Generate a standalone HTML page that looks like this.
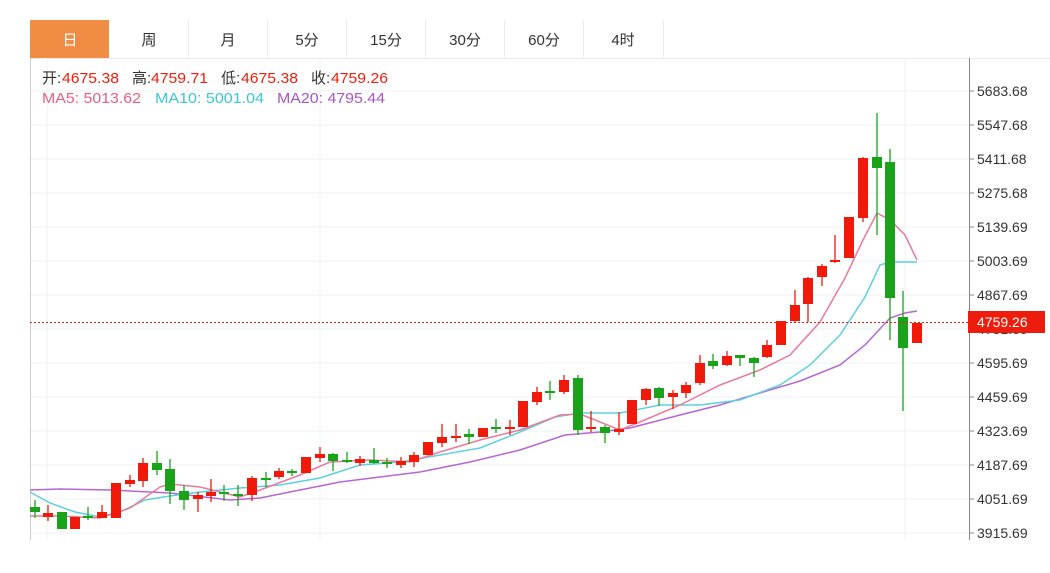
<!DOCTYPE html>
<html><head><meta charset="utf-8"><style>
html,body{margin:0;padding:0;background:#fff;width:1050px;height:573px;overflow:hidden}
svg{display:block;font-family:"Liberation Sans","Noto Sans CJK SC",sans-serif}
</style></head><body>
<svg width="1050" height="573" viewBox="0 0 1050 573" xmlns="http://www.w3.org/2000/svg">
<g font-size="15" fill="#333" text-anchor="middle">
<rect x="30" y="20" width="79" height="38" fill="#f08c43"/>
<line x1="30" y1="58.5" x2="1050" y2="58.5" stroke="#ececec"/>
<g stroke="#ececec"><line x1="188.5" y1="20" x2="188.5" y2="58"/><line x1="267.5" y1="20" x2="267.5" y2="58"/><line x1="346.5" y1="20" x2="346.5" y2="58"/><line x1="425.5" y1="20" x2="425.5" y2="58"/><line x1="504.5" y1="20" x2="504.5" y2="58"/><line x1="583.5" y1="20" x2="583.5" y2="58"/><line x1="663.5" y1="20" x2="663.5" y2="58"/></g>
<text x="70" y="45" fill="#fff">日</text>
<text x="149" y="45">周</text>
<text x="228" y="45">月</text>
<text x="307" y="45">5分</text>
<text x="386" y="45">15分</text>
<text x="465" y="45">30分</text>
<text x="544" y="45">60分</text>
<text x="623" y="45">4时</text>
</g>
<g stroke="#eef0f3">
<line x1="30" y1="91" x2="969" y2="91"/><line x1="30" y1="125" x2="969" y2="125"/><line x1="30" y1="159" x2="969" y2="159"/><line x1="30" y1="193" x2="969" y2="193"/><line x1="30" y1="227" x2="969" y2="227"/><line x1="30" y1="261" x2="969" y2="261"/><line x1="30" y1="295" x2="969" y2="295"/><line x1="30" y1="329" x2="969" y2="329"/><line x1="30" y1="363" x2="969" y2="363"/><line x1="30" y1="397" x2="969" y2="397"/><line x1="30" y1="431" x2="969" y2="431"/><line x1="30" y1="465" x2="969" y2="465"/><line x1="30" y1="499" x2="969" y2="499"/><line x1="30" y1="533" x2="969" y2="533"/>
<line x1="47" y1="58" x2="47" y2="540"/><line x1="320" y1="58" x2="320" y2="540"/><line x1="905" y1="58" x2="905" y2="540"/>
</g>
<line x1="30.5" y1="58" x2="30.5" y2="540" stroke="#ccc"/>
<line x1="969.5" y1="58" x2="969.5" y2="540" stroke="#888"/>
<g stroke="#888"><line x1="969" y1="91" x2="974" y2="91"/><line x1="969" y1="125" x2="974" y2="125"/><line x1="969" y1="159" x2="974" y2="159"/><line x1="969" y1="193" x2="974" y2="193"/><line x1="969" y1="227" x2="974" y2="227"/><line x1="969" y1="261" x2="974" y2="261"/><line x1="969" y1="295" x2="974" y2="295"/><line x1="969" y1="329" x2="974" y2="329"/><line x1="969" y1="363" x2="974" y2="363"/><line x1="969" y1="397" x2="974" y2="397"/><line x1="969" y1="431" x2="974" y2="431"/><line x1="969" y1="465" x2="974" y2="465"/><line x1="969" y1="499" x2="974" y2="499"/><line x1="969" y1="533" x2="974" y2="533"/></g>
<g font-size="14" fill="#333">
<text x="977" y="96">5683.68</text><text x="977" y="130">5547.68</text><text x="977" y="164">5411.68</text><text x="977" y="198">5275.68</text><text x="977" y="232">5139.69</text><text x="977" y="266">5003.69</text><text x="977" y="300">4867.69</text><text x="977" y="334">4731.69</text><text x="977" y="368">4595.69</text><text x="977" y="402">4459.69</text><text x="977" y="436">4323.69</text><text x="977" y="470">4187.69</text><text x="977" y="504">4051.69</text><text x="977" y="538">3915.69</text>
</g>
<g font-size="15">
<text x="42" y="83" fill="#333">开:</text><text x="62" y="83" fill="#f01e0a" textLength="57" lengthAdjust="spacingAndGlyphs">4675.38</text>
<text x="132" y="83" fill="#333">高:</text><text x="151" y="83" fill="#f01e0a" textLength="57" lengthAdjust="spacingAndGlyphs">4759.71</text>
<text x="221" y="83" fill="#333">低:</text><text x="241" y="83" fill="#f01e0a" textLength="57" lengthAdjust="spacingAndGlyphs">4675.38</text>
<text x="311" y="83" fill="#333">收:</text><text x="331" y="83" fill="#f01e0a" textLength="57" lengthAdjust="spacingAndGlyphs">4759.26</text>
<text x="42" y="103" fill="#e8607f" textLength="99" lengthAdjust="spacingAndGlyphs">MA5: 5013.62</text>
<text x="155" y="103" fill="#3cc6d8" textLength="109" lengthAdjust="spacingAndGlyphs">MA10: 5001.04</text>
<text x="277" y="103" fill="#a855c8" textLength="108" lengthAdjust="spacingAndGlyphs">MA20: 4795.44</text>
</g>
<polyline fill="none" stroke="#b667d4" stroke-width="1.5" points="30,490 60,489 110,490 170,493 230,500 260,498 300,490 340,482 380,477 420,472 470,462 520,450 565,435 600,432 630,428 680,415 720,405 760,393 800,381 840,365 865,345 890,318 905,313 917,311"/>
<polyline fill="none" stroke="#5ed0e0" stroke-width="1.5" points="30,492 50,503 75,512 100,517 120,512 145,500 170,496 200,492 240,488 280,485 320,478 360,465 400,462 440,455 480,448 520,432 555,417 580,413 620,413 660,405 700,405 740,400 780,385 810,365 840,335 865,297 880,265 890,262 917,262"/>
<polyline fill="none" stroke="#ea7a9c" stroke-width="1.5" points="30,516 60,516 100,518 130,508 160,487 170,484 200,487 240,497 260,490 300,475 330,462 370,460 410,462 440,452 480,440 520,430 560,415 580,414 620,430 640,422 680,405 720,385 760,370 790,355 820,322 845,278 863,240 877,213 890,220 905,235 917,260"/>
<g stroke="#1aa31a" stroke-width="1.3">
<line x1="35" y1="500" x2="35" y2="518"/><line x1="62" y1="512" x2="62" y2="529"/><line x1="88" y1="507" x2="88" y2="520"/><line x1="157" y1="451" x2="157" y2="475"/><line x1="170" y1="459" x2="170" y2="504"/><line x1="184" y1="485" x2="184" y2="510"/><line x1="224" y1="485" x2="224" y2="501"/><line x1="238" y1="485" x2="238" y2="506"/><line x1="266" y1="472" x2="266" y2="487"/><line x1="292" y1="469" x2="292" y2="476"/><line x1="333" y1="453" x2="333" y2="471"/><line x1="347" y1="452" x2="347" y2="463"/><line x1="374" y1="448" x2="374" y2="464"/><line x1="387" y1="458" x2="387" y2="468"/><line x1="469" y1="429" x2="469" y2="444"/><line x1="496" y1="419" x2="496" y2="433"/><line x1="550" y1="381" x2="550" y2="400"/><line x1="578" y1="375" x2="578" y2="435"/><line x1="605" y1="425" x2="605" y2="443"/><line x1="659" y1="387" x2="659" y2="406"/><line x1="713" y1="354" x2="713" y2="369"/><line x1="740" y1="355" x2="740" y2="366"/><line x1="754" y1="357" x2="754" y2="377"/><line x1="877" y1="113" x2="877" y2="235"/><line x1="890" y1="149" x2="890" y2="340"/><line x1="903" y1="291" x2="903" y2="411"/>
</g>
<g fill="#1aa31a">
<rect x="30" y="507" width="10" height="5"/><rect x="57" y="512" width="10" height="17"/><rect x="83" y="516" width="10" height="2"/><rect x="152" y="463" width="10" height="7"/><rect x="165" y="469" width="10" height="22"/><rect x="179" y="491" width="10" height="9"/><rect x="219" y="492" width="10" height="2"/><rect x="233" y="494" width="10" height="2"/><rect x="261" y="478" width="10" height="2"/><rect x="287" y="471" width="10" height="2"/><rect x="328" y="454" width="10" height="7"/><rect x="342" y="460" width="10" height="2"/><rect x="369" y="460" width="10" height="3"/><rect x="382" y="462" width="10" height="2"/><rect x="464" y="434" width="10" height="3"/><rect x="491" y="427" width="10" height="2"/><rect x="545" y="391" width="10" height="2"/><rect x="573" y="378" width="10" height="52"/><rect x="600" y="427" width="10" height="6"/><rect x="654" y="388" width="10" height="10"/><rect x="708" y="361" width="10" height="5"/><rect x="735" y="355" width="10" height="3"/><rect x="749" y="358" width="10" height="5"/><rect x="872" y="157" width="10" height="11"/><rect x="885" y="162" width="10" height="136"/><rect x="898" y="317" width="10" height="31"/>
</g>
<g stroke="#f0190a" stroke-width="1.3">
<line x1="48" y1="505" x2="48" y2="521"/><line x1="102" y1="505" x2="102" y2="518"/><line x1="130" y1="475" x2="130" y2="487"/><line x1="143" y1="458" x2="143" y2="487"/><line x1="198" y1="492" x2="198" y2="512"/><line x1="211" y1="479" x2="211" y2="502"/><line x1="252" y1="476" x2="252" y2="501"/><line x1="279" y1="468" x2="279" y2="479"/><line x1="320" y1="447" x2="320" y2="462"/><line x1="360" y1="456" x2="360" y2="466"/><line x1="401" y1="457" x2="401" y2="468"/><line x1="414" y1="452" x2="414" y2="467"/><line x1="442" y1="424" x2="442" y2="447"/><line x1="456" y1="424" x2="456" y2="442"/><line x1="510" y1="420" x2="510" y2="435"/><line x1="537" y1="387" x2="537" y2="405"/><line x1="564" y1="375" x2="564" y2="394"/><line x1="591" y1="411" x2="591" y2="432"/><line x1="619" y1="412" x2="619" y2="435"/><line x1="646" y1="388" x2="646" y2="405"/><line x1="673" y1="390" x2="673" y2="409"/><line x1="686" y1="382" x2="686" y2="398"/><line x1="700" y1="355" x2="700" y2="385"/><line x1="727" y1="351" x2="727" y2="366"/><line x1="767" y1="340" x2="767" y2="358"/><line x1="795" y1="290" x2="795" y2="322"/><line x1="808" y1="277" x2="808" y2="322"/><line x1="822" y1="264" x2="822" y2="286"/><line x1="835" y1="235" x2="835" y2="263"/><line x1="863" y1="157" x2="863" y2="222"/>
</g>
<g fill="#f0190a">
<rect x="43" y="513" width="10" height="4"/><rect x="70" y="517" width="10" height="12"/><rect x="97" y="512" width="10" height="6"/><rect x="111" y="483" width="10" height="35"/><rect x="125" y="480" width="10" height="4"/><rect x="138" y="463" width="10" height="18"/><rect x="193" y="495" width="10" height="4"/><rect x="206" y="492" width="10" height="4"/><rect x="247" y="478" width="10" height="17"/><rect x="274" y="471" width="10" height="6"/><rect x="301" y="457" width="10" height="16"/><rect x="315" y="454" width="10" height="4"/><rect x="355" y="459" width="10" height="4"/><rect x="396" y="461" width="10" height="4"/><rect x="409" y="455" width="10" height="7"/><rect x="423" y="442" width="10" height="13"/><rect x="437" y="437" width="10" height="6"/><rect x="451" y="436" width="10" height="2"/><rect x="478" y="428" width="10" height="9"/><rect x="505" y="427" width="10" height="2"/><rect x="518" y="401" width="10" height="26"/><rect x="532" y="392" width="10" height="10"/><rect x="559" y="380" width="10" height="12"/><rect x="586" y="427" width="10" height="2"/><rect x="614" y="429" width="10" height="3"/><rect x="627" y="400" width="10" height="24"/><rect x="641" y="389" width="10" height="11"/><rect x="668" y="393" width="10" height="4"/><rect x="681" y="385" width="10" height="8"/><rect x="695" y="363" width="10" height="20"/><rect x="722" y="356" width="10" height="9"/><rect x="762" y="345" width="10" height="12"/><rect x="776" y="321" width="10" height="24"/><rect x="790" y="305" width="10" height="16"/><rect x="803" y="278" width="10" height="26"/><rect x="817" y="266" width="10" height="11"/><rect x="830" y="260" width="10" height="2"/><rect x="844" y="217" width="10" height="41"/><rect x="858" y="158" width="10" height="60"/><rect x="912" y="323" width="10" height="20"/>
</g>
<line x1="30" y1="322.5" x2="968" y2="322.5" stroke="#f0190a" stroke-dasharray="2,2"/>
<rect x="968" y="311" width="77" height="22" fill="#ee1c0c"/>
<text x="977" y="327" font-size="14" fill="#fff">4759.26</text>
</svg>
</body></html>
